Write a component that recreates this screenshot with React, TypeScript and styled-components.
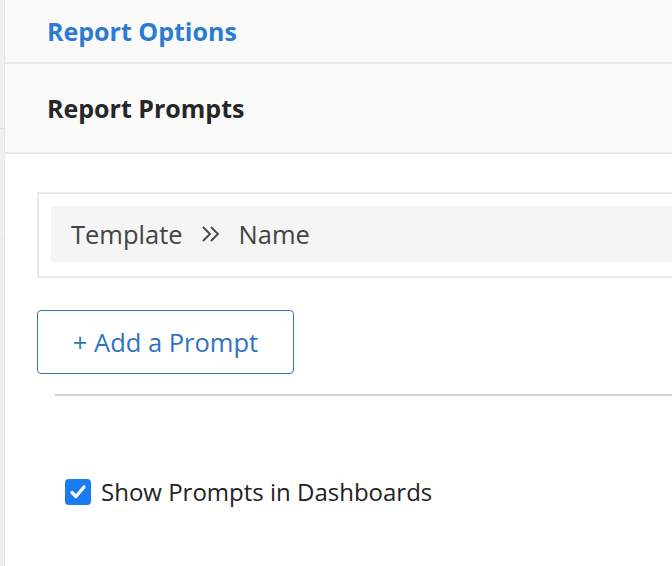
import React from "react";
import styled, { createGlobalStyle } from "styled-components";

const Global = createGlobalStyle`
  html, body { margin: 0; padding: 0; background: #ffffff; overflow: hidden; }
  body { font-family: "Open Sans", Lato, sans-serif; }
  * { box-sizing: border-box; }
`;

const Page = styled.div`
  display: flex;
  width: 720px;
  height: 566px;
`;

const SideStrip = styled.div`
  width: 5px;
  flex: none;
  display: flex;
  flex-direction: column;
  background: #eef0f3;
  border-right: 1px solid #e3e5ea;
`;

const StripCell = styled.div<{ $h: number }>`
  height: ${(p) => p.$h}px;
  flex: none;
  border-bottom: 1px solid #dfe1e5;
`;

const Main = styled.div`
  flex: 1;
  display: flex;
  flex-direction: column;
  background: #ffffff;
`;

const HeaderRow = styled.div<{ $h: number }>`
  height: ${(p) => p.$h}px;
  flex: none;
  display: flex;
  align-items: center;
  padding-left: 42px;
  background: #fafafa;
  border-bottom: 2px solid #e8e8e8;
`;

const Title = styled.h2<{ $blue?: boolean }>`
  margin: 0;
  font-size: 25px;
  font-weight: 700;
  color: ${(p) => (p.$blue ? "#2a7bd3" : "#262626")};
`;

const Content = styled.div`
  display: flex;
  flex-direction: column;
  padding: 38px 0 0 32px;
`;

const PromptBox = styled.div`
  height: 86px;
  border: 2px solid #e8e8e8;
  border-right: none;
  padding: 12px 0 14px 12px;
  display: flex;
`;

const PromptChip = styled.div`
  flex: 1;
  display: flex;
  align-items: center;
  gap: 18px;
  padding-left: 20px;
  background: #f5f5f5;
  border-radius: 4px 0 0 4px;
  font-size: 25.5px;
  color: #444444;
`;

const Chevrons = styled.span`
  display: flex;
  align-items: center;
`;

const AddButton = styled.button`
  margin-top: 32px;
  width: 257px;
  height: 64px;
  border: 1.5px solid #2f73c3;
  border-radius: 4px;
  background: #ffffff;
  color: #2f73c3;
  font-family: "Open Sans", Lato, sans-serif;
  font-size: 25.5px;
  text-align: center;
  padding: 0;
`;

const Divider = styled.div`
  margin: 20px 0 0 18px;
  height: 2px;
  background: #cfcfcf;
`;

const CheckRow = styled.label`
  margin: 79px 0 0 28px;
  display: flex;
  align-items: center;
  gap: 10px;
  font-size: 24px;
  color: #222222;
`;

const CheckBox = styled.span`
  width: 26px;
  height: 26px;
  border-radius: 4px;
  background: #1a7cf0;
  display: flex;
  align-items: center;
  justify-content: center;
`;

export default function App() {
  return (
    <>
      <Global />
      <Page>
        <SideStrip>
          <StripCell $h={129} />
          <StripCell $h={110} />
        </SideStrip>
        <Main>
          <HeaderRow $h={64}>
            <Title $blue>Report Options</Title>
          </HeaderRow>
          <HeaderRow $h={90}>
            <Title>Report Prompts</Title>
          </HeaderRow>
          <Content>
            <PromptBox>
              <PromptChip>
                <span>Template</span>
                <Chevrons>
                  <svg width="20" height="18" viewBox="0 0 20 18" fill="none" stroke="#444" strokeWidth="1.8">
                    <path d="M2 2l7 7-7 7M10 2l7 7-7 7" />
                  </svg>
                </Chevrons>
                <span>Name</span>
              </PromptChip>
            </PromptBox>
            <AddButton>+ Add a Prompt</AddButton>
            <Divider />
            <CheckRow>
              <CheckBox>
                <svg width="18" height="16" viewBox="0 0 18 16" fill="none" stroke="#fff" strokeWidth="3.2" strokeLinecap="round" strokeLinejoin="round">
                  <path d="M3 8.5l4 4L15 3" />
                </svg>
              </CheckBox>
              <span>Show Prompts in Dashboards</span>
            </CheckRow>
          </Content>
        </Main>
      </Page>
    </>
  );
}
